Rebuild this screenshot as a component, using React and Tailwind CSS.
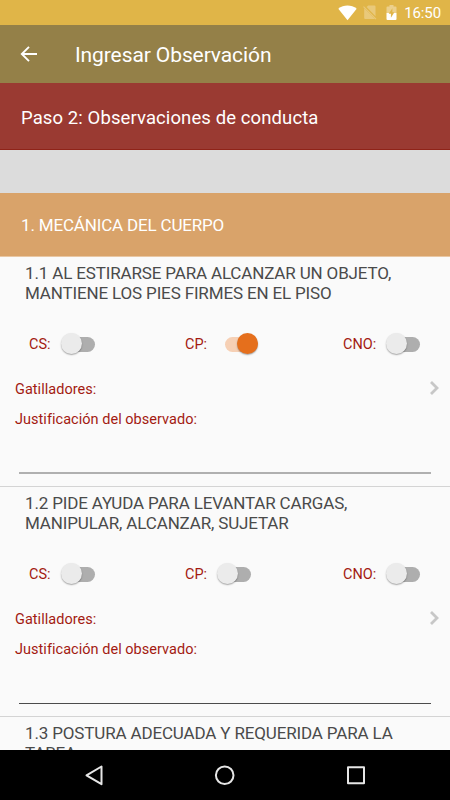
import React from "react";

const observations = [
  {
    title: ["1.1 AL ESTIRARSE PARA ALCANZAR UN OBJETO,", "MANTIENE LOS PIES FIRMES EN EL PISO"],
    selected: "CP",
    line: "h-[2px] bg-[#b0b0b0]",
  },
  {
    title: ["1.2 PIDE AYUDA PARA LEVANTAR CARGAS,", "MANIPULAR, ALCANZAR, SUJETAR"],
    selected: null,
    line: "h-px bg-[#4c4c4c] mt-px",
  },
];

const nextTitle = ["1.3 POSTURA ADECUADA Y REQUERIDA PARA LA", "TAREA"];

const StatusBar = () => (
  <div className="h-[25px] shrink-0 bg-[#e0b548] flex items-center justify-end pr-[9px] text-white">
    <svg width="19" height="16" viewBox="0 0 19 16" className="mr-[6px]">
      <path d="M0.3 3.8C5.6-0.6 13.4-0.6 18.7 3.8L9.5 15.2Z" fill="currentColor" />
    </svg>
    <svg width="14" height="15" viewBox="0 0 14 15" className="mr-[9px]">
      <path d="M5.2 0.5H11.5Q12.5 0.5 12.5 1.5V11.2L3.6 2.1Z" fill="#e9c97a" />
      <path d="M1.2 3.2L12 14H2.2Q1.2 14 1.2 13Z" fill="#e9c97a" />
      <path d="M0.5 1.6L13 14.2" stroke="#e9c97a" strokeWidth="1.1" />
    </svg>
    <svg width="11" height="15" viewBox="0 0 11 15" className="mr-[7px]">
      <path d="M3.5 0H7.5V1.5H9.5Q10.5 1.5 10.5 2.5V8H0.5V2.5Q0.5 1.5 1.5 1.5H3.5Z" fill="#ecd08c" />
      <path d="M0.5 8H10.5V14Q10.5 15 9.5 15H1.5Q0.5 15 0.5 14Z" fill="currentColor" />
      <path d="M6.4 3.2V7.2H8.4L4.9 12.8V8.8H2.7Z" fill="#e0b548" />
    </svg>
    <span className="text-[15px] leading-[25px] pt-px tracking-[-0.1px]">16:50</span>
  </div>
);

const AppBar = () => (
  <header className="h-[58px] shrink-0 bg-[#948048] flex items-center pl-5 text-white">
    <svg width="17" height="16" viewBox="0 0 17 16" fill="none" stroke="currentColor" strokeWidth="1.9">
      <path d="M17 8H1.8M9 0.8L1.8 8L9 15.2" />
    </svg>
    <h1 className="ml-[38px] text-[21px] leading-[28px] mt-[2px] tracking-[-0.1px]">Ingresar Observación</h1>
  </header>
);

const Toggle = ({ label, on }) => (
  <div className="flex items-center">
    <span className="text-[14.5px] leading-5 pt-[2px] text-[#a31a12]">{label}:</span>
    <div className="relative ml-[10px] w-[43px] h-[22px] flex items-center">
      <div className={`w-[33px] h-[15px] rounded-full ${on ? "ml-[8px] bg-[#f6d0b5]" : "ml-[1px] bg-[#aeaeae]"}`} />
      <div
        className={`absolute top-0 size-[21px] rounded-full shadow-[0_1px_1.5px_rgba(0,0,0,0.35)] ${
          on ? "left-[20px] bg-[#e56f1c]" : "left-0 bg-[#ebebeb]"
        }`}
      />
    </div>
  </div>
);

const ObservationTitle = ({ rows }) => (
  <h3 className="pl-[25px] text-[17px] leading-[20px] tracking-[-0.15px] text-[#4a4a4a]">
    {rows.map((row) => (
      <span key={row} className="block whitespace-nowrap">{row}</span>
    ))}
  </h3>
);

const Observation = ({ title, selected, line }) => (
  <section className="h-[230px] shrink-0 border-b border-[#d4d4d4] pt-[6px]">
    <ObservationTitle rows={title} />

    <div className="mt-[30px] h-[22px] pl-[29px] flex">
      <div className="w-[156px]"><Toggle label="CS" on={selected === "CS"} /></div>
      <div className="w-[158px]"><Toggle label="CP" on={selected === "CP"} /></div>
      <Toggle label="CNO" on={selected === "CNO"} />
    </div>

    <div className="mt-[25px] h-5 pl-[15px] pr-[11px] flex items-center justify-between">
      <span className="text-[14.5px] leading-5 tracking-[0.03px] text-[#a31a12]">Gatilladores:</span>
      <svg width="9" height="14" viewBox="0 0 9 14" fill="none" stroke="#c7c7c7" strokeWidth="2.8" className="-mt-[4px]">
        <path d="M1 1L7 7L1 13" />
      </svg>
    </div>

    <p className="mt-[10px] pl-[15px] text-[14.5px] leading-5 tracking-[0.03px] text-[#a31a12]">
      Justificación del observado:
    </p>
    <div className="mx-[19px] pt-[42px]">
      <div className={line} />
    </div>
  </section>
);

const NavigationBar = () => (
  <nav className="h-[50px] shrink-0 bg-black">
    <svg width="450" height="50" viewBox="0 0 450 50" fill="none" stroke="#e6e6e6" strokeWidth="2" strokeLinejoin="round">
      <path d="M86.5 25.3L101.5 16.5V34.2Z" />
      <circle cx="224.7" cy="25.3" r="8.8" />
      <rect x="348" y="17.3" width="16" height="16" />
    </svg>
  </nav>
);

const App = () => {
  return (
    <div className="w-[450px] h-[800px] flex flex-col overflow-hidden bg-[#fafafa] font-[Roboto,sans-serif]">
      <StatusBar />
      <AppBar />

      <div className="h-[67px] shrink-0 bg-[#9a3a32] border-b border-[#8f2318] pl-[21px] pt-[3px] flex items-center">
        <h2 className="text-[18.5px] leading-6 tracking-[0.1px] text-white">Paso 2: Observaciones de conducta</h2>
      </div>
      <div className="h-[43px] shrink-0 bg-[#dcdcdc]" />
      <div className="h-[64px] shrink-0 bg-[#d9a36a] border-b border-[#e9c7a3] pl-[21px] flex items-center">
        <h2 className="text-[17px] leading-6 tracking-[-0.17px] text-white">1. MECÁNICA DEL CUERPO</h2>
      </div>

      <main className="flex-1 min-h-0 overflow-hidden flex flex-col">
        {observations.map((item) => (
          <Observation key={item.title[0]} {...item} />
        ))}
        <section className="shrink-0 pt-[6px]">
          <ObservationTitle rows={nextTitle} />
        </section>
      </main>

      <NavigationBar />
    </div>
  );
};

export default App;
